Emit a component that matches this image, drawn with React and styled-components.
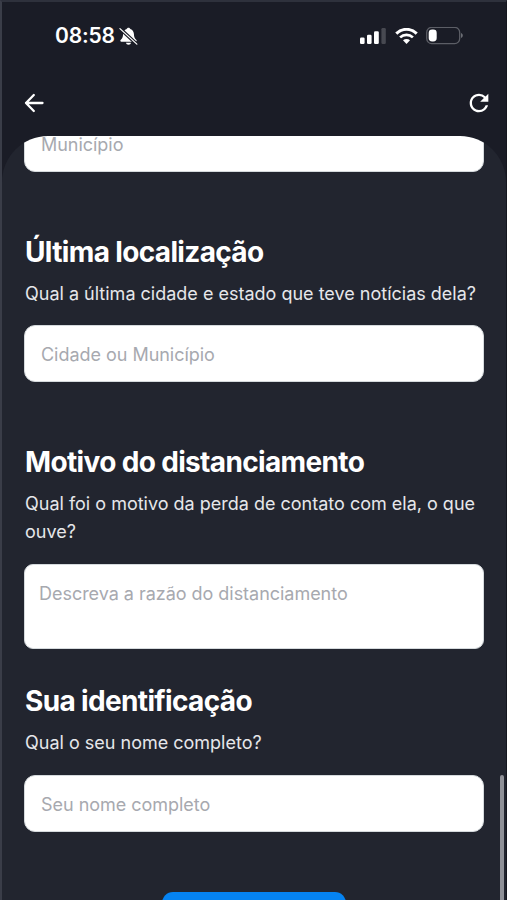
import React from 'react';
import styled, { createGlobalStyle } from 'styled-components';
import { MdRefresh } from 'react-icons/md';

const GlobalStyle = createGlobalStyle`
  *,
  *::before,
  *::after {
    box-sizing: border-box;
  }

  body {
    margin: 0;
    background: #1a1c26;
    font-family: Inter, 'Liberation Sans', sans-serif;
    overflow: hidden;
  }
`;

const StyledScreen = styled.div`
  position: relative;
  display: flex;
  flex-direction: column;
  width: 507px;
  height: 900px;
  overflow: hidden;
  background: #1a1c26;
  border-top: 2px solid #2e313c;
  border-left: 2px solid #3a3d48;
  border-right: 1px solid #14161e;
`;

const StyledStatusBar = styled.div`
  display: flex;
  align-items: center;
  justify-content: space-between;
  height: 68px;
  padding: 0 42px 0 53px;
`;

const StyledStatusGroup = styled.div`
  display: flex;
  align-items: center;
  gap: ${({ gap }) => gap};

  svg {
    display: block;
  }
`;

const StyledTime = styled.span`
  width: 60px;
  color: white;
  font-size: 21px;
  font-weight: 600;
  line-height: 26px;
  letter-spacing: -0.2px;
  white-space: nowrap;
`;

const StyledNavBar = styled.nav`
  display: flex;
  align-items: center;
  justify-content: space-between;
  height: 66px;
  padding: 0 13px 0 20px;
`;

const StyledNavButton = styled.button`
  display: flex;
  padding: 0;
  border: none;
  background: none;
  color: white;
`;

const StyledPanel = styled.main`
  flex: 1;
  min-height: 0;
  padding: 0 22px;
  overflow: hidden;
  border-radius: 46px 46px 0 0;
  background: #22252f;
`;

const StyledForm = styled.form`
  display: flex;
  flex-direction: column;
  margin-top: -21px;
`;

const StyledSection = styled.section`
  display: flex;
  flex-direction: column;
  margin-top: ${({ offset }) => offset};
`;

const StyledTitle = styled.h2`
  margin: 0 0 11px 1px;
  color: white;
  font-size: 28px;
  font-weight: 700;
  line-height: 34px;
  letter-spacing: -0.65px;
  white-space: nowrap;
`;

const StyledParagraph = styled.p`
  margin: 0 -10px ${({ gap }) => gap || '18px'} 1px;
  color: #e6e7ea;
  font-size: 18px;
  font-weight: 400;
  line-height: 28px;
`;

const StyledInput = styled.input`
  width: 100%;
  height: 57px;
  padding: 1px 16px 0;
  border: 1px solid #d5dadd;
  border-radius: 11px;
  outline: none;
  background: white;
  font-family: inherit;
  font-size: 18px;
  letter-spacing: -0.03px;

  &::placeholder {
    color: #a7a9af;
    opacity: 1;
  }
`;

const StyledTextarea = styled(StyledInput).attrs({ as: 'textarea' })`
  display: block;
  height: 85px;
  padding: 15px 14px;
  border-radius: 9px;
  line-height: 28px;
  resize: none;
`;

const StyledSubmit = styled.button`
  align-self: center;
  width: 184px;
  height: 56px;
  margin-top: 60px;
  border: none;
  border-radius: 11px;
  background: #0583f2;
`;

const StyledScrollbar = styled.div`
  position: absolute;
  right: 2px;
  bottom: -4px;
  width: 4px;
  height: 129px;
  border-radius: 2px;
  background: #8f9198;
`;

const BellOffIcon = () => (
  <svg width="19" height="20" viewBox="0 0 20 20">
    <path
      d="M10 1.2c-1 0-1.7.6-1.9 1.4C5.6 3.4 4.4 5.4 4.3 8c-.1 3.4-.8 4.6-2.4 6-.9.8-.5 2 .6 2h15c1.1 0 1.5-1.2.6-2-1.6-1.4-2.3-2.6-2.4-6-.1-2.600-1.300-4.600-3.800-5.400C11.700 1.800 11 1.200 10 1.200Z"
      fill="white"
    />
    <path d="M7.300 17h5.400c-.3 1.300-1.300 2.100-2.700 2.100S7.600 18.300 7.300 17Z" fill="white" />
    <path d="M1 2.200 18.800 18.600" stroke="#1a1c26" strokeWidth="3.600" />
    <path d="M1 2.200 18.800 18.600" stroke="white" strokeWidth="1.300" strokeLinecap="round" />
  </svg>
);

const SignalIcon = () => (
  <svg width="27" height="17" viewBox="0 0 27 17" fill="white">
    <rect x="0" y="9.500" width="4.600" height="6.500" rx="1.300" />
    <rect x="7" y="6.700" width="4.600" height="9.300" rx="1.300" />
    <rect x="14" y="3.200" width="4.800" height="12.800" rx="1.300" />
    <rect x="21.400" y="0" width="4.400" height="16" rx="1.300" opacity="0.2" />
  </svg>
);

const WifiIcon = () => (
  <svg width="23" height="17" viewBox="0 0 23 17" fill="none" stroke="white">
    <path d="M1.300 5.600C7-.100 16-.100 21.700 5.600" strokeWidth="3" />
    <path d="M5.100 9.400c3.600-3.500 9.200-3.500 12.800 0" strokeWidth="2.700" />
    <path d="M8 12.200c2-1.700 5-1.700 7 0L11.500 16Z" fill="white" stroke="none" />
  </svg>
);

const BatteryIcon = () => (
  <svg width="38" height="18" viewBox="0 0 38 18">
    <rect x="0.700" y="0.400" width="33" height="16.200" rx="5" fill="none" stroke="#5c5e66" strokeWidth="1.300" />
    <rect x="2.700" y="2.500" width="8" height="12" rx="3.400" fill="white" />
    <path d="M35 6c2.400.8 2.400 4.200 0 5Z" fill="#6b6d74" />
  </svg>
);

const BackIcon = () => (
  <svg
    width="24"
    height="24"
    viewBox="0 0 24 24"
    fill="none"
    stroke="currentColor"
    strokeWidth="2.300"
    strokeLinecap="round"
    strokeLinejoin="round"
  >
    <path d="M20.500 12H4M11.800 4 4 12l7.800 8" />
  </svg>
);

const App = () => (
  <>
    <GlobalStyle />
    <StyledScreen>
      <StyledStatusBar>
        <StyledStatusGroup gap="4px">
          <StyledTime>08:58</StyledTime>
          <BellOffIcon />
        </StyledStatusGroup>
        <StyledStatusGroup gap="8px">
          <SignalIcon />
          <WifiIcon />
          <BatteryIcon />
        </StyledStatusGroup>
      </StyledStatusBar>
      <StyledNavBar>
        <StyledNavButton aria-label="Voltar">
          <BackIcon />
        </StyledNavButton>
        <StyledNavButton aria-label="Atualizar">
          <MdRefresh size={28} />
        </StyledNavButton>
      </StyledNavBar>
      <StyledPanel>
        <StyledForm>
          <StyledInput placeholder="Município" />
          <StyledSection offset="63px">
            <StyledTitle>Última localização</StyledTitle>
            <StyledParagraph gap="17px">
              Qual a última cidade e estado que teve notícias dela?
            </StyledParagraph>
            <StyledInput placeholder="Cidade ou Município" />
          </StyledSection>
          <StyledSection offset="63px">
            <StyledTitle>Motivo do distanciamento</StyledTitle>
            <StyledParagraph>
              Qual foi o motivo da perda de contato com ela, o que ouve?
            </StyledParagraph>
            <StyledTextarea placeholder="Descreva a razão do distanciamento" />
          </StyledSection>
          <StyledSection offset="35px">
            <StyledTitle>Sua identificação</StyledTitle>
            <StyledParagraph>Qual o seu nome completo?</StyledParagraph>
            <StyledInput placeholder="Seu nome completo" />
          </StyledSection>
          <StyledSubmit type="button" aria-label="Enviar" />
        </StyledForm>
      </StyledPanel>
      <StyledScrollbar />
    </StyledScreen>
  </>
);

export default App;
